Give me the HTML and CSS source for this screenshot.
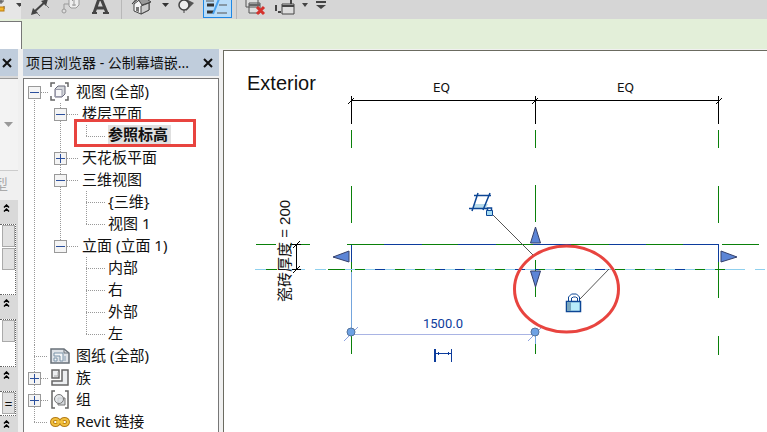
FILE: index.html
```html
<!DOCTYPE html>
<html lang="zh-CN">
<head>
  <meta charset="UTF-8" />
  <meta name="viewport" content="width=device-width, initial-scale=1.0"/>
  <title>项目浏览器 - 公制幕墙嵌板</title>
  <link rel="stylesheet" href="styles.css">
</head>
<body>
  <header class="toolbar">
    <button class="tool" aria-label="测量">
      <svg width="21" height="19" viewBox="0 0 21 19"><path d="M0 9h4v-3M0 1h4" fill="none" stroke="#555"/><path d="M1 0v4M-1 2h4" stroke="#555"/><rect x="-3" y="7" width="7" height="4" fill="#f5b52b" stroke="#b97a10"/><path d="M16 3h7l-3.500 4z" fill="#444"/></svg>
    </button>
    <button class="tool" aria-label="对齐尺寸标注">
      <svg width="33" height="19" viewBox="21 0 33 19"><path d="M33 13L46 1" stroke="#444" stroke-width="2"/><path d="M31 15l2-7 5 5zM48-1l-7 2 5 5z" fill="#444"/><path d="M37 13l3 3M46 5l3 3" stroke="#777"/></svg>
    </button>
    <button class="tool" aria-label="按类别标记">
      <svg width="30" height="19" viewBox="54 0 30 19"><path d="M64 10V4h5" fill="none" stroke="#999"/><circle cx="64" cy="11" r="2" fill="#ddd" stroke="#999"/><path d="M69-2h10v7l-3 3h-5l-2-2z" fill="#eee" stroke="#999"/><path d="M72 1l2-2v7M72 5h4" fill="none" stroke="#999"/></svg>
    </button>
    <button class="tool" aria-label="文字">
      <svg width="34" height="19" viewBox="84 0 34 19"><path d="M94 13L100-4 107 13M96 8h9" fill="none" stroke="#454545" stroke-width="3"/><path d="M92 13h5M103 13h6" stroke="#454545" stroke-width="2"/></svg>
    </button>
    <span class="divider"></span>
    <button class="tool" aria-label="默认三维视图">
      <svg width="53" height="19" viewBox="122 0 53 19"><path d="M132 4v7l7 3 8-4V3l-7-5z" fill="#f5f5f5" stroke="#444"/><path d="M139 14V6l8-3v7z" fill="#ccc" stroke="#444"/><path d="M130 4l6-5 4 6 9-3-7-5h-6z" fill="#999" stroke="#444"/><path d="M134 7h3v5l-3-1z" fill="#777"/><path d="M160 3h7l-3.500 4z" fill="#333"/></svg>
    </button>
    <button class="tool" aria-label="剖面">
      <svg width="26" height="19" viewBox="175 0 26 19"><path d="M182-2l10 5-8 8z" fill="#555"/><circle cx="182" cy="5" r="5" fill="#eee" stroke="#444" stroke-width="1.500"/><path d="M182 10v3" stroke="#444"/></svg>
    </button>
    <button class="tool active" aria-label="细线">
      <svg width="27" height="17" viewBox="202 0 27 17"><path d="M205 5h7M205 12h7" stroke="#333" stroke-width="3"/><path d="M204 1h8M217 5h8M215 13h10" stroke="#555"/><path d="M217-1L211 14" stroke="#4aa3ef" stroke-width="2"/></svg>
    </button>
    <span class="divider wide"></span>
    <button class="tool" aria-label="关闭隐藏窗口">
      <svg width="32" height="19" viewBox="241 0 32 19"><path d="M245-2h12v9h-12zM248 3h11v10h-11z" fill="#ddd" stroke="#555"/><path d="M248 5h11" stroke="#666" stroke-width="2"/><path d="M256 7l7 7M263 7l-7 7" stroke="#d5322d" stroke-width="3"/></svg>
    </button>
    <button class="tool" aria-label="切换窗口">
      <svg width="41" height="19" viewBox="273 0 41 19"><path d="M278-1h12v5M275 5v6M277 12h3" fill="none" stroke="#444" stroke-width="2"/><path d="M281 4h12v10h-12z" fill="#ddd" stroke="#444"/><path d="M281 6h12" stroke="#444" stroke-width="2"/><path d="M301 3h6l-3 4z" fill="#444"/></svg>
    </button>
    <button class="tool" aria-label="自定义快速访问工具栏">
      <svg width="20" height="19" viewBox="317 0 20 19"><path d="M318 2h10" stroke="#444" stroke-width="2"/><path d="M318 5h10l-5 4z" fill="#444"/></svg>
    </button>
  </header>

  <div class="options-bar">
    <div class="tab"></div>
  </div>

  <main class="workspace">
    <aside class="properties">
      <div class="titlebar">
        <button class="close" aria-label="关闭属性"><svg width="10" height="10" viewBox="0 0 10 10"><path d="M1 1l8 8M9 1L1 9"/></svg></button>
      </div>
      <div class="type-selector"><svg width="9" height="6" viewBox="0 0 9 6"><path d="M0 0h9L4.500 5z" fill="#999"/></svg></div>
      <div class="edit-type">型</div>
      <div class="group"><svg class="chevrons" viewBox="0 0 7 8"><path d="M1 3.500l2.500-2.500L6 3.500M1 7.500l2.500-2.500L6 7.500"/></svg></div>
      <div class="cells">
        <span class="cell"></span>
        <span class="cell"></span>
        <span class="cell empty"></span>
      </div>
      <div class="group"><svg class="chevrons" viewBox="0 0 7 8"><path d="M1 3.500l2.500-2.500L6 3.500M1 7.500l2.500-2.500L6 7.500"/></svg></div>
      <div class="cells">
        <span class="cell"></span>
        <span class="cell empty"></span>
      </div>
      <div class="group"><svg class="chevrons" viewBox="0 0 7 8"><path d="M1 3.500l2.500-2.500L6 3.500M1 7.500l2.500-2.500L6 7.500"/></svg></div>
      <div class="cells">
        <span class="cell">=</span>
      </div>
      <div class="group"><svg class="chevrons" viewBox="0 0 7 8"><path d="M1 3.500l2.500-2.500L6 3.500M1 7.500l2.500-2.500L6 7.500"/></svg></div>
    </aside>

    <section class="browser">
      <div class="titlebar">
        <h1>项目浏览器 - 公制幕墙嵌...</h1>
        <button class="close" aria-label="关闭项目浏览器"><svg width="10" height="10" viewBox="0 0 10 10"><path d="M1 1l8 8M9 1L1 9"/></svg></button>
      </div>
      <ul class="tree">
        <li>
          <div class="row">
            <button class="expander" aria-label="折叠"></button><span class="dash"></span>
            <svg class="icon" viewBox="0 0 20 20"><path d="M1 5V1h4M15 1h3v4M18 14v4h-3M5 18H1v-4" fill="none" stroke="#666" stroke-width="1.500"/><path d="M5 7l3-3h7v8l-3 3H5z" fill="#d5d8dc" stroke="#667"/><path d="M5.500 7.500h6.500v7H5.500z" fill="#f8f8f8" stroke="#99a"/></svg>
            <span class="label">视图 (全部)</span>
          </div>
          <ul>
            <li>
              <div class="row"><button class="expander" aria-label="折叠"></button><span class="dash"></span><span class="label">楼层平面</span></div>
              <ul class="views">
                <li><div class="row"><span class="dash"></span><strong class="label current">参照标高</strong></div></li>
              </ul>
            </li>
            <li>
              <div class="row"><button class="expander plus" aria-label="展开"></button><span class="dash"></span><span class="label">天花板平面</span></div>
            </li>
            <li>
              <div class="row"><button class="expander" aria-label="折叠"></button><span class="dash"></span><span class="label">三维视图</span></div>
              <ul class="views">
                <li><div class="row"><span class="dash"></span><span class="label">{三维}</span></div></li>
                <li><div class="row"><span class="dash"></span><span class="label">视图 1</span></div></li>
              </ul>
            </li>
            <li>
              <div class="row"><button class="expander" aria-label="折叠"></button><span class="dash"></span><span class="label">立面 (立面 1)</span></div>
              <ul class="views">
                <li><div class="row"><span class="dash"></span><span class="label">内部</span></div></li>
                <li><div class="row"><span class="dash"></span><span class="label">右</span></div></li>
                <li><div class="row"><span class="dash"></span><span class="label">外部</span></div></li>
                <li><div class="row"><span class="dash"></span><span class="label">左</span></div></li>
              </ul>
            </li>
          </ul>
        </li>
        <li>
          <div class="row leaf">
            <span class="dash"></span>
            <svg class="icon" viewBox="0 0 20 20"><path d="M1 3h13l5 4v10H1z" fill="#dfe3e8" stroke="#687078" stroke-width="1.500"/><path d="M14 3v4h5" fill="none" stroke="#687078"/><path d="M4 7h9v8h-3v-5H4zM4 12h3v3H4z" fill="#f4f6f8" stroke="#7b93a8"/><path d="M15 10v5" stroke="#8ba0b3"/></svg>
            <span class="label">图纸 (全部)</span>
          </div>
        </li>
        <li>
          <div class="row">
            <button class="expander plus" aria-label="展开"></button><span class="dash"></span>
            <svg class="icon" viewBox="0 0 20 20"><path d="M2 2h7v8H2zM12 2h6v15H2v-4h10z" fill="#eceef0" stroke="#666" stroke-width="1.500"/><path d="M4 8h4V4" fill="none" stroke="#aaa"/></svg>
            <span class="label">族</span>
          </div>
        </li>
        <li>
          <div class="row">
            <button class="expander plus" aria-label="展开"></button><span class="dash"></span>
            <svg class="icon" viewBox="0 0 20 20"><path d="M5 1H2v17h3M15 1h3v17h-3" fill="none" stroke="#666" stroke-width="1.500"/><path d="M8 8h7v7H8z" fill="#d5d9dd" stroke="#777"/><circle cx="9" cy="9" r="4.500" fill="#dde1e5" fill-opacity=".8" stroke="#777"/></svg>
            <span class="label">组</span>
          </div>
        </li>
        <li>
          <div class="row leaf">
            <span class="dash"></span>
            <svg class="icon" viewBox="0 0 20 20"><g fill="none" stroke="#b47b16" stroke-width="4"><ellipse cx="5.500" cy="10" rx="3.500" ry="3"/><ellipse cx="14.500" cy="10" rx="3.500" ry="3"/></g><g fill="none" stroke="#f2c03d" stroke-width="2"><ellipse cx="5.500" cy="10" rx="3.500" ry="3"/><ellipse cx="14.500" cy="10" rx="3.500" ry="3"/><path d="M6 10h8"/></g></svg>
            <span class="label">Revit 链接</span>
          </div>
        </li>
      </ul>
      <div class="highlight"></div>
    </section>

    <section class="canvas">
      <svg class="drawing" viewBox="224 51 543 381" fill="none">
        <text class="view-name" x="247" y="90">Exterior</text>

        <!-- EQ dimension -->
        <g stroke="#000">
          <path d="M351 100.500H719M351.500 96v28M535.500 96v28M718.500 96v28"/>
          <path d="M348 104l6-6M532 104l6-6M716 104l6-6"/>
        </g>
        <text class="eq" x="433" y="92">EQ</text>
        <text class="eq" x="617" y="92">EQ</text>

        <!-- reference planes -->
        <g stroke="#0a800a">
          <path d="M351.500 130v18M351.500 186v37M351.500 262v10M351.500 336v18"/>
          <path d="M535.500 130v18M535.500 185v37M535.500 260v37M535.500 334v20"/>
          <path d="M718.500 130v18M718.500 186v37M718.500 262v36M718.500 336v19"/>
          <path d="M256 244.500h20M290 244.500h20M347 244.500h372M722 244.500h37"/>
          <path d="M266 269.500h11M328 269.500h412"/>
        </g>
        <g stroke="#0c3c9c">
          <path d="M384 244.500h38M458 244.500h38M533 244.500h38M609 244.500h37M683 244.500h36"/>
          <path d="M351.500 245v17M718.500 245v17"/>
          <path d="M366 269.500h24M440 269.500h24M515 269.500h24M590 269.500h24M665 269.500h30"/>
        </g>
        <g stroke="#8fd0ee">
          <path d="M255 269.500h11M285 269.500h20M315 269.500h11M734 269.500h11M755 269.500h10"/>
          <path d="M345 269.500h390" stroke-dasharray="10 10"/>
        </g>
        <path d="M351.500 272v58" stroke="#74a5dd"/>

        <!-- thickness dimension -->
        <path d="M296.500 245v24M292 244.500h9M292 269.500h9M293 248l7-7M293 273l7-7" stroke="#000"/>
        <text class="thickness" transform="translate(290 302) rotate(-90)">瓷砖厚度 = 200</text>

        <!-- shape handles -->
        <g fill="#5c85d6" stroke="#35406b">
          <path d="M333 257l16-6v11zM737 257l-16-6v11zM535.500 227l-5 16h10zM535.500 287l-5-16h10z"/>
        </g>

        <!-- temporary dimension -->
        <path d="M351 334.500h184" stroke="#a9b4e4"/>
        <path d="M344 341l14-14M528 341l14-14" stroke="#8fa4e0"/>
        <path d="M535.500 336v8" stroke="#74a5dd"/>
        <g fill="#6ea2e4" stroke="#54739c">
          <circle cx="351" cy="332" r="4"/>
          <circle cx="535" cy="332" r="4"/>
        </g>
        <text class="length" x="423" y="328">1500.0</text>
        <g stroke="#0c3c9c">
          <path d="M435 349v13" stroke-width="2"/>
          <path d="M451.500 349v13M436 353.500h15M438.500 352v3M448.500 352v3"/>
        </g>

        <!-- constraint locks -->
        <path d="M493 215l40 40M580 299l29-30" stroke="#555"/>
        <path d="M473 208l1-4h14l-2 4z" fill="#b9dcec"/>
        <g stroke="#0c4695">
          <path d="M474 195.500h17M469 208.500h18M478 193l-6 18M490 193l-7 17" stroke-width="1.500"/>
          <path d="M487.500 211v-3h4v3" stroke-width="1.500"/>
          <path d="M486.500 210.500h6v5h-6z" fill="#a5dcf2"/>
          <path d="M568.500 301v-4l3-3h5l3 3v4M571.500 301v-3l2-1h2l2 1v3"/>
          <path d="M566.500 301.500h14v10h-14z" fill="#b8ecfa" stroke-width="1.500"/>
        </g>
        <path d="M567 302h4v9h-4z" fill="#78a6bd"/>

        <ellipse cx="566.500" cy="289" rx="52" ry="43" stroke="#e8443f" stroke-width="3"/>
      </svg>
    </section>
  </main>
</body>
</html>
```
FILE: styles.css
```css
* {
  box-sizing: border-box;
}

body {
  margin: 0;
  height: 100vh;
  display: flex;
  flex-direction: column;
  overflow: hidden;
  font-family: "Noto Sans", "Noto Sans CJK SC", sans-serif;
  font-size: 15px;
  color: #111;
  background: #f0f0f0;
}

button {
  padding: 0;
  border: none;
  background: none;
  cursor: pointer;
}

svg {
  display: block;
  flex: none;
}

ul {
  margin: 0;
  padding: 0;
  list-style: none;
}

.toolbar {
  display: flex;
  flex: none;
  height: 19px;
  background: #d6d6d6;
}

.tool {
  flex: none;
  overflow: hidden;
}

.tool:hover {
  background: #e6e6e6;
}

.tool.active {
  height: 18px;
  border: 1px solid #1e88e5;
  border-top: none;
  background: #b9dcf8;
}

.divider {
  width: 1px;
  margin: 0 2px 0 3px;
  background: #b8b8b8;
}

.divider.wide {
  margin: 0 5px 0 4px;
}

.options-bar {
  flex: none;
  height: 30px;
  padding-top: 2px;
  background: #e3efd9;
}

.tab {
  width: 22px;
  height: 28px;
  border: 1px solid #777;
  border-width: 1px 1px 0 0;
  background: #fff;
}

.workspace {
  display: flex;
  flex: 1;
  min-height: 0;
}

.titlebar {
  display: flex;
  flex: none;
  align-items: center;
  justify-content: space-between;
  height: 27px;
  padding: 0 6px 0 3px;
  background: #c0cddc;
}

.titlebar h1 {
  margin: 0;
  padding-bottom: 2px;
  font-size: 14px;
  font-weight: normal;
  white-space: nowrap;
}

.close path {
  fill: none;
  stroke: #111;
  stroke-width: 2;
}

/* properties palette, only its right edge is visible */
.properties {
  display: flex;
  flex: none;
  flex-direction: column;
  width: 18px;
  margin-right: 5px;
  background: #d9d9d9;
}

.properties .titlebar {
  padding: 0 0 0 2px;
}

.type-selector {
  display: flex;
  flex: none;
  align-items: center;
  height: 92px;
  margin-top: 2px;
  padding-left: 4px;
  border-top: 1px solid #999;
  background: #f3f3f3;
}

.edit-type {
  display: flex;
  flex: none;
  justify-content: flex-end;
  align-items: center;
  height: 30px;
  padding: 0 10px 4px 0;
  border-top: 1px solid #ccc;
  color: #aaa;
  background: #f0f0f0;
}

.group {
  flex: none;
  height: 24px;
  padding: 4px 0 0 3px;
}

.chevrons {
  width: 7px;
  height: 8px;
  fill: none;
  stroke: #000;
  stroke-width: 1.5;
}

.cells {
  flex: none;
  width: 16px;
  border: 1px dotted #666;
  border-left: none;
  background: #fff;
}

.cell {
  display: flex;
  align-items: center;
  justify-content: center;
  height: 22px;
  margin: 0 0 1px 2px;
  border: 1px solid #aaa;
  font-size: 14px;
  background: #e1e1e1;
}

.cell.empty {
  border: none;
  background: none;
}

.browser {
  position: relative;
  display: flex;
  flex: none;
  flex-direction: column;
  width: 196px;
  margin-right: 4px;
}

.tree {
  flex: 1;
  margin-top: 2px;
  padding: 2px 0 0 4px;
  border: 1px solid #777;
  border-width: 1px 1px 0 1px;
  background: #fff;
  overflow: hidden;
}

.tree li {
  background: repeating-linear-gradient(#999 0 1px, #fff 1px 2px) 6px 0 / 1px 100% no-repeat;
}

.tree > li:first-child {
  background-position-y: 11px;
}

.tree li:last-child {
  background-size: 1px 11px;
}

.tree ul {
  margin-left: 26px;
}

.row {
  display: flex;
  align-items: center;
  height: 22px;
  white-space: nowrap;
}

.label {
  padding-bottom: 2px;
  line-height: 20px;
}

.dash {
  flex: none;
  width: 12px;
  height: 1px;
  margin-right: 3px;
  background: repeating-linear-gradient(90deg, #999 0 1px, #fff 1px 2px);
}

.tree > li > .row .dash {
  width: 7px;
  margin-right: 2px;
}

.tree > li > .leaf .dash {
  width: 14px;
  margin-left: 6px;
}

.tree .views .dash {
  width: 19px;
  margin-left: 6px;
}

.icon {
  width: 20px;
  height: 20px;
  margin-right: 6px;
}

.expander {
  flex: none;
  width: 13px;
  height: 13px;
  border: 1px solid #999;
  background: linear-gradient(#2b4f9c, #2b4f9c) center / 9px 1px no-repeat, #f4f4f4;
}

.expander.plus {
  background: linear-gradient(#2b4f9c, #2b4f9c) center / 9px 1px no-repeat,
    linear-gradient(#2b4f9c, #2b4f9c) center / 1px 9px no-repeat, #f4f4f4;
}

.current {
  margin-bottom: 2px;
  padding: 0 3px 2px 0;
  line-height: 18px;
  background: #e0e0e0;
}

/* red frame over the current view */
.highlight {
  position: absolute;
  top: 70px;
  left: 51px;
  width: 122px;
  height: 28px;
  border: 3px solid #e8443f;
}

.canvas {
  flex: 1;
  min-width: 0;
  margin-top: 1px;
  border: 1px solid #6b6b60;
  border-width: 1px 0 0 1px;
  background: #fff;
  overflow: hidden;
}

.drawing {
  width: 543px;
  height: 381px;
}

.drawing text {
  fill: #111;
}

.view-name {
  font: 20px "Liberation Sans", Arial, sans-serif;
}

.eq {
  font: 12px "DejaVu Sans", sans-serif;
}

.drawing .length {
  font: 13px Roboto, sans-serif;
  fill: #0c3c9c;
}

.thickness {
  font: 15px "Liberation Sans", "Noto Sans CJK SC", sans-serif;
}
```
